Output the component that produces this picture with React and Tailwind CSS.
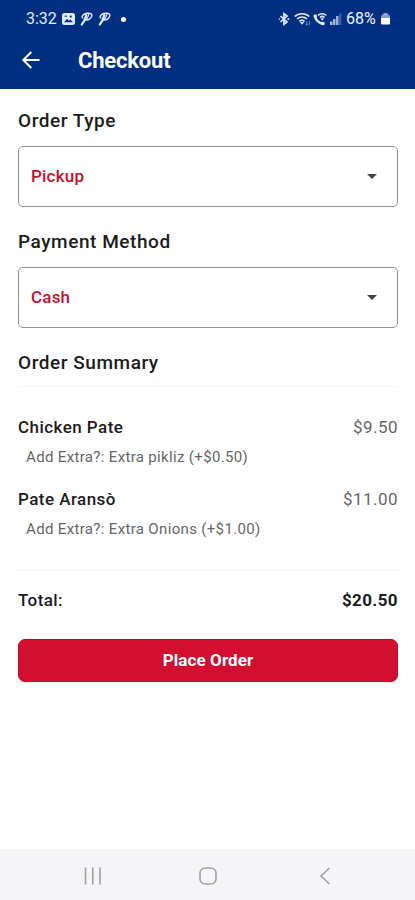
const orderItems = [
  { id: 1, name: 'Chicken Pate', price: '$9.50', extra: 'Add Extra?: Extra pikliz (+$0.50)' },
  { id: 2, name: 'Pate Aransò', price: '$11.00', extra: 'Add Extra?: Extra Onions (+$1.00)' },
];

function PinIcon() {
  return (
    <svg viewBox="0 0 13 14" className="h-3.5 w-[13px]" fill="none" stroke="currentColor" strokeLinecap="round">
      <path d="M2.800 6C1 5 2.800 1.800 7 1.300c3.800-.4 5.500.8 4.600 3C10.800 6.600 8.500 8 6 8" strokeWidth="1.400" />
      <path d="M6.300 3C5.500 6.500 4 10 1.800 12.500" strokeWidth="2.200" />
      <path d="M8.800 2.500C8.300 4.700 7.300 6.500 5.500 8" strokeWidth="1.200" />
    </svg>
  );
}

function StatusBar() {
  return (
    <div className="flex h-[38px] items-center justify-between pl-[26px] pr-[25px] text-[#e3e9fa]">
      <div className="flex items-center">
        <span className="w-[31px] whitespace-nowrap text-base leading-none">3:32</span>
        <svg viewBox="0 0 13 12" className="ml-[5px] h-3 w-[13px]">
          <rect width="13" height="12" rx="2.500" fill="currentColor" />
          <path d="M2 9.300l3-3.500 2 2 1.300-1.300L11 9.300z" fill="#002f82" />
          <circle cx="8.800" cy="3.600" r="1.100" fill="#002f82" />
          <path d="M2.500 3.200h2.500" stroke="#002f82" />
        </svg>
        <span className="ml-[5px]"><PinIcon /></span>
        <span className="ml-[5px]"><PinIcon /></span>
        <span className="ml-2.5 h-[5px] w-[5px] rounded-full bg-white" />
      </div>
      <div className="flex items-center">
        {/* Bluetooth */}
        <svg viewBox="0 0 12 14" className="h-3.5 w-3" fill="none" stroke="currentColor" strokeWidth="1.700">
          <path d="M2.500 4l6.500 6-3 2.300V1.700L9 4l-6.500 6" />
          <circle cx="1.500" cy="7" r=".8" fill="currentColor" stroke="none" />
          <circle cx="10.300" cy="7" r="1" fill="currentColor" stroke="none" />
        </svg>
        {/* Wifi */}
        <svg viewBox="0 0 17 14" className="ml-1 h-3.5 w-[17px]" fill="none" stroke="currentColor" strokeWidth="1.700">
          <path d="M.8 4.500C4.500.8 11.500.8 15.200 4.500M3.200 7c2.600-2.700 7-2.700 9.600 0M5.500 9.400c1.400-1.400 3.600-1.400 5 0" />
          <path d="M5.800 10L8 12.700l2.200-2.700z" fill="currentColor" stroke="none" />
          <path d="M12.800 9v4M11.500 11.800l1.300 1.400 1.300-1.400M15.500 13V9" strokeWidth=".9" opacity=".5" />
        </svg>
        {/* Wifi calling */}
        <svg viewBox="0 0 14 14" className="ml-0.5 h-3.5 w-3.5" fill="none" stroke="currentColor">
          <path d="M2 3c0 4.500 3.500 8.500 9 9" strokeWidth="2.400" />
          <path d="M2.200 2.500v3M8 11.200l3.500.6" strokeWidth="3" />
          <path d="M5 3.500c2.200-2.300 6-2.300 8.200 0M7 5.500c1.300-1.200 3.200-1.200 4.500 0" strokeWidth="1.600" />
          <path d="M7.600 6.200l1.700 2.500L11 6.200z" fill="currentColor" stroke="none" />
        </svg>
        {/* Signal */}
        <svg viewBox="0 0 12 12" className="ml-[3px] h-3 w-3" fill="currentColor">
          <rect y="8.500" width="2.500" height="3.500" opacity=".75" />
          <rect x="3" y="6" width="2.500" height="6" opacity=".7" />
          <rect x="6" y="3" width="2.500" height="9" opacity=".7" />
          <rect x="9.200" y=".5" width="2" height="11.500" opacity=".3" />
        </svg>
        <span className="ml-1 w-[34px] whitespace-nowrap text-base leading-none text-[#eff3ff]">68%</span>
        <svg viewBox="0 0 9 12" className="ml-px h-3 w-[9px]" fill="currentColor">
          <path d="M2.500 0h4v2h-4z" opacity=".6" />
          <path d="M1.500 1.500h6L9 3v2H0V3z" opacity=".6" />
          <path d="M0 5h9v5.500q0 1-1 1H1q-1 0-1-1z" fill="white" />
        </svg>
      </div>
    </div>
  );
}

function Header() {
  return (
    <header className="h-[89px] bg-[#002f82] text-white">
      <StatusBar />
      <div className="flex h-11 items-center pl-[21px]">
        <button aria-label="Go back">
          <svg viewBox="0 0 20 20" className="h-5 w-5" fill="none" stroke="currentColor" strokeWidth="2">
            <path d="M18.500 10H2.500M10.300 2L2.300 10l8 8" />
          </svg>
        </button>
        <h1 className="ml-[37px] pt-px text-[22px] font-bold leading-none tracking-[-0.2px]">Checkout</h1>
      </div>
    </header>
  );
}

function SelectField({ label, value }) {
  return (
    <section className="mb-[23px]">
      <h2 className="mb-[13px] text-[19px] font-medium leading-6 tracking-[0.55px]">{label}</h2>
      <button className="flex h-[61px] w-full items-center justify-between rounded-[5px] border border-[#929292] pl-3 pr-5 text-[#c90f2c]">
        <span className="text-[17px] font-medium tracking-[0.2px]">{value}</span>
        <svg viewBox="0 0 10 5" className="h-[5px] w-2.5" fill="#444">
          <path d="M0 0h10L5 5z" />
        </svg>
      </button>
    </section>
  );
}

function NavigationBar() {
  return (
    <nav className="flex h-[51px] items-center bg-[#f5f5f7] pl-[84px] pt-0.5 text-[#a1a1a3]">
      <svg viewBox="0 0 18 18" className="h-[18px] w-[18px]" stroke="currentColor" strokeWidth="1.600">
        <path d="M1.500.5v17M8.800.5v17M16 .5v17" />
      </svg>
      <svg viewBox="0 0 18 18" className="ml-[97px] h-[18px] w-[18px]" fill="none" stroke="currentColor" strokeWidth="1.600">
        <rect x="1" y="1" width="16" height="16" rx="5" />
      </svg>
      <svg viewBox="0 0 12 18" className="ml-[102px] h-[18px] w-3" fill="none" stroke="currentColor" strokeWidth="1.600">
        <path d="M10.500 1L2 9l8.500 8" />
      </svg>
    </nav>
  );
}

export default function App() {
  return (
    <div className="flex h-screen flex-col bg-white font-['Roboto',sans-serif] text-[#1c1c1c]">
      <Header />
      <main className="flex-1 pl-[18px] pr-[17px] pt-5">
        <SelectField label="Order Type" value="Pickup" />
        <SelectField label="Payment Method" value="Cash" />

        <h2 className="text-[19px] font-medium leading-6 tracking-[0.55px]">Order Summary</h2>
        <div className="mt-[11px] border-t border-[#f6f6f6] pt-7">
          {orderItems.map((item) => (
            <div key={item.id} className="h-[72px]">
              <div className="flex justify-between text-[17px] leading-6 tracking-[0.45px]">
                <span className="font-medium">{item.name}</span>
                <span className="text-[#666]">{item.price}</span>
              </div>
              <p className="mt-1.5 pl-2 text-[15px] leading-6 tracking-[0.34px] text-[#666]">{item.extra}</p>
            </div>
          ))}
        </div>
        <div className="mt-2.5 flex justify-between border-t-2 border-[#f8f8f8] pt-[17px] text-[17px] leading-6 tracking-[0.4px]">
          <span className="font-medium">Total:</span>
          <span className="font-bold">$20.50</span>
        </div>
        <button className="mt-[27px] h-[43px] w-full rounded-[7px] border border-[#c70820] bg-[#d20f30] text-[17px] font-bold tracking-[0.1px] text-white">
          Place Order
        </button>
      </main>
      <NavigationBar />
    </div>
  );
}
